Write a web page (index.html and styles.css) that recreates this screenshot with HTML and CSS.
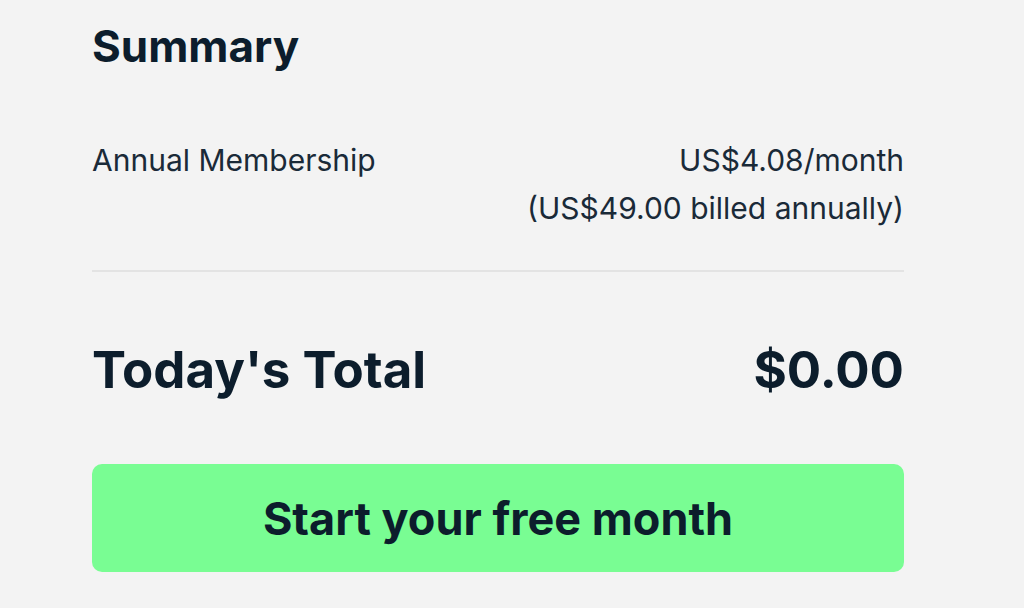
FILE: index.html
```html
<!DOCTYPE html>
<html>
<head>
<meta charset="utf-8">
<link rel="stylesheet" href="styles.css">
</head>
<body>
<main class="summary">
  <h1 class="title">Summary</h1>
  <div class="line-item">
    <div class="item-name">Annual Membership</div>
    <div class="item-price">
      <div>US$4.08/month</div>
      <div>(US$49.00 billed annually)</div>
    </div>
  </div>
  <hr class="divider">
  <div class="total">
    <div class="total-label">Today's Total</div>
    <div class="total-value">$0.00</div>
  </div>
  <button class="cta">Start your free month</button>
</main>
</body>
</html>
```

FILE: styles.css
```css
html, body {
  margin: 0;
  padding: 0;
  background: #f3f3f3;
}
body {
  font-family: Inter, "Noto Sans", sans-serif;
  color: #0c1d2c;
  width: 1024px;
  height: 608px;
  overflow: hidden;
}
.summary {
  width: 812px;
  margin-left: 92px;
  padding-top: 20px;
  display: flex;
  flex-direction: column;
}
.title {
  margin: 0;
  font-size: 44px;
  font-weight: 700;
  line-height: 52px;
}
.line-item {
  display: flex;
  justify-content: space-between;
  margin-top: 64px;
  font-size: 30px;
  line-height: 48px;
  color: #1a2a38;
}
.item-price {
  text-align: right;
}
.divider {
  border: 0;
  height: 2px;
  background: #e3e3e3;
  margin: 38px 0 0 0;
}
.total {
  display: flex;
  justify-content: space-between;
  align-items: center;
  margin-top: 68px;
  font-size: 51px;
  font-weight: 700;
  line-height: 60px;
}
.cta {
  margin-top: 64px;
  height: 108px;
  border: 0;
  border-radius: 10px;
  background: #79fd93;
  font-family: inherit;
  color: #0c1d2c;
  font-size: 45px;
  font-weight: 700;
  cursor: pointer;
}
```
